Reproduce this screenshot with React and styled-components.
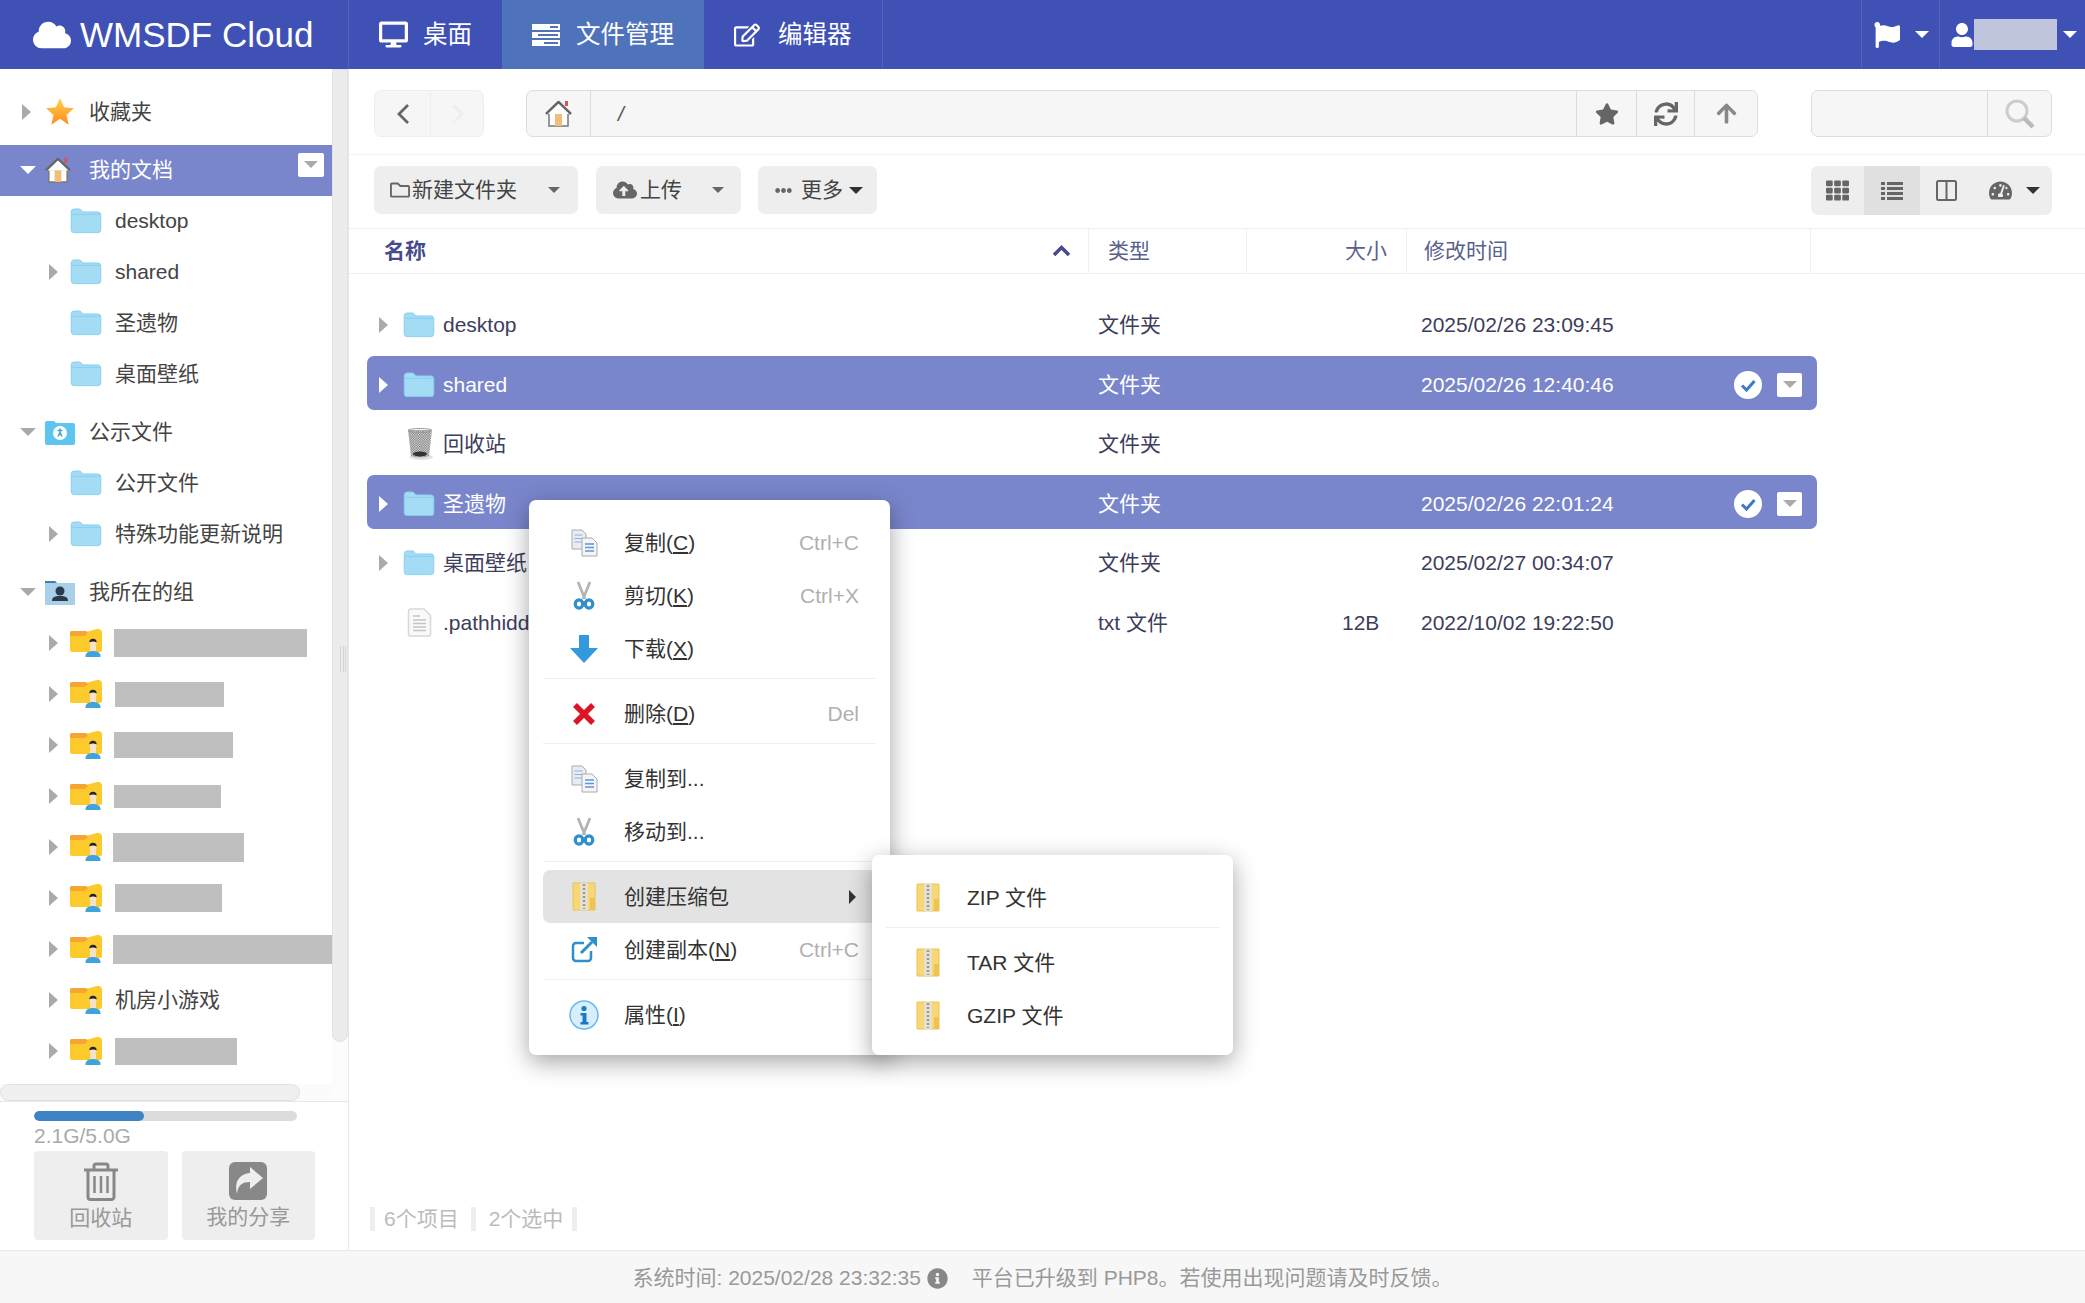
import React from 'react';
import styled, { createGlobalStyle } from 'styled-components';
import {
  FaCloud, FaDesktop, FaRegEdit, FaFlag, FaUser, FaStar, FaSync,
  FaArrowUp, FaTh, FaTachometerAlt, FaRegFolder, FaCloudUploadAlt,
  FaEllipsisH, FaInfoCircle,
} from 'react-icons/fa';

const GlobalStyle = createGlobalStyle`
  html, body { margin: 0; padding: 0; height: 100%; background: #fff; }
  body { font-family: "Liberation Sans", "Noto Sans CJK SC", sans-serif; font-size: 21px; line-height: 24px; color: #444; }
  * { box-sizing: border-box; }
`;

const Page = styled.div`
  position: relative;
  height: 100vh;
  display: flex;
  flex-direction: column;
  overflow: hidden;
`;

/* ---------- top bar ---------- */
const TopBar = styled.header`
  height: 69px;
  flex: none;
  display: flex;
  background: #3f51b5;
  color: #fff;
`;
const Brand = styled.div`
  width: 349px;
  display: flex;
  align-items: center;
  gap: 9px;
  padding-left: 33px;
  font-size: 35px;
  line-height: 40px;
  border-right: 1px solid #5263c0;
`;
const Tab = styled.div`
  display: flex;
  align-items: center;
  padding: 0 30px;
  font-size: 24.5px;
  line-height: 28px;
  background: ${(p) => (p.$active ? '#4f73bb' : 'transparent')};
  border-right: ${(p) => (p.$last ? '1px solid #5263c0' : 'none')};
`;
const TabIcon = styled.span`
  width: 44px;
  display: flex;
  font-size: ${(p) => p.$size || 29}px;
`;
const Spacer = styled.div`
  flex: 1;
`;
const TopCell = styled.div`
  width: ${(p) => p.$w}px;
  display: flex;
  align-items: center;
  border-left: 1px solid #5263c0;
  padding-left: ${(p) => p.$pad}px;
`;
const Caret = styled.span`
  flex: none;
  width: 0;
  height: 0;
  border-left: ${(p) => p.$size || 7}px solid transparent;
  border-right: ${(p) => p.$size || 7}px solid transparent;
  border-top: ${(p) => p.$size || 7}px solid ${(p) => p.$color || '#fff'};
  margin-left: ${(p) => p.$ml || 0}px;
`;
const UserBlock = styled.div`
  width: 83px;
  height: 31px;
  background: #bfc5dc;
`;

/* ---------- body ---------- */
const Body = styled.div`
  flex: 1;
  min-height: 0;
  display: flex;
`;
const Sidebar = styled.aside`
  width: 349px;
  flex: none;
  display: flex;
  flex-direction: column;
  border-right: 1px solid #e8e8e8;
`;
const TreePane = styled.div`
  flex: 1;
  min-height: 0;
  display: flex;
`;
const TreeCol = styled.div`
  width: 332px;
  display: flex;
  flex-direction: column;
`;
const Tree = styled.div`
  flex: 1;
  min-height: 0;
  padding-top: 17.5px;
  overflow: hidden;
`;
const TreeGroup = styled.div`
  margin-bottom: 7px;
`;
const TreeRow = styled.div`
  height: 51px;
  display: flex;
  align-items: center;
  padding-left: ${(p) => (p.$level ? 49 : 20)}px;
  background: ${(p) => (p.$selected ? '#7986cb' : 'transparent')};
  color: ${(p) => (p.$selected ? '#fff' : '#444')};
`;
const ArrowSlot = styled.span`
  flex: none;
  width: ${(p) => p.$w || (p.$level ? 21 : 25)}px;
  display: flex;
  align-items: center;
`;
const ArrowRight = styled.span`
  width: 0;
  height: 0;
  border-top: 8px solid transparent;
  border-bottom: 8px solid transparent;
  border-left: 9px solid ${(p) => p.$color || '#aaa'};
  margin-left: ${(p) => p.$ml || 0}px;
`;
const IconSlot = styled.span`
  flex: none;
  width: ${(p) => p.$w || 45}px;
  display: flex;
  align-items: center;
`;
const Redacted = styled.div`
  background: #bfbfbf;
  width: ${(p) => p.$w}px;
  height: ${(p) => p.$h}px;
  margin-left: ${(p) => p.$ml || 0}px;
`;
const SmallDrop = styled.span`
  flex: none;
  display: flex;
  align-items: center;
  justify-content: center;
  width: ${(p) => p.$w}px;
  height: 24px;
  background: #fff;
  border-radius: 2px;
`;
const SideDrop = styled(SmallDrop)`
  margin-left: auto;
  margin-right: 8px;
  align-self: flex-start;
  margin-top: 8px;
`;
const HTrack = styled.div`
  height: 17px;
  flex: none;
  background: #fbfbfb;
`;
const HThumb = styled.div`
  width: 300px;
  height: 17px;
  background: #f0f0f0;
  border: 1px solid #e0e0e0;
  border-radius: 9px;
`;
const VTrack = styled.div`
  position: relative;
  flex: 1;
  background: #fcfcfc;
`;
const VThumb = styled.div`
  height: 973px;
  background: #ececec;
  border: 1px solid #e2e2e2;
  border-radius: 0 0 8px 8px;
`;
const Grip = styled.div`
  position: absolute;
  left: 8px;
  top: 577px;
  width: 6px;
  height: 26px;
  border-left: 1px solid #d4d4d4;
  border-right: 1px solid #d4d4d4;
  background: linear-gradient(#d4d4d4, #d4d4d4) center / 1px 100% no-repeat;
`;
const SideBottom = styled.div`
  height: 149px;
  flex: none;
  border-top: 1px solid #e8e8e8;
  padding: 9px 33px 0 34px;
`;
const QuotaBar = styled.div`
  width: 263px;
  height: 10px;
  border-radius: 5px;
  background: #dcdcdc;
  overflow: hidden;
`;
const QuotaFill = styled.div`
  height: 100%;
  background: #3f85c5;
  border-radius: 5px;
`;
const QuotaText = styled.div`
  color: #aaa;
  margin-top: 3px;
`;
const SideButtons = styled.div`
  display: flex;
  gap: 14px;
  margin-top: 3px;
`;
const SideButton = styled.div`
  flex: 1;
  height: 89px;
  background: #eee;
  border-radius: 4px;
  display: flex;
  flex-direction: column;
  align-items: center;
  padding-top: 11px;
  color: #999;
`;
const SideLabel = styled.div`
  margin-top: 5px;
`;

/* ---------- main ---------- */
const Main = styled.main`
  flex: 1;
  min-width: 0;
  display: flex;
  flex-direction: column;
`;
const PathBar = styled.div`
  flex: none;
  height: 86px;
  padding: 21px 33px 0 25px;
  display: flex;
  border-bottom: 1px solid #f3f3f3;
`;
const Boxed = styled.div`
  height: 47px;
  width: ${(p) => (p.$w ? `${p.$w}px` : 'auto')};
  flex: ${(p) => (p.$w ? 'none' : '1')};
  margin-left: ${(p) => p.$ml || 0}px;
  display: flex;
  background: #f6f6f6;
  border: 1px solid ${(p) => p.$border || '#ddd'};
  border-radius: 7px;
`;
const BoxCell = styled.div`
  width: ${(p) => (p.$w ? `${p.$w}px` : 'auto')};
  flex: ${(p) => (p.$w ? 'none' : '1')};
  display: flex;
  align-items: center;
  justify-content: ${(p) => (p.$w ? 'center' : 'flex-start')};
  font-size: ${(p) => p.$size || 24}px;
  color: ${(p) => p.$color || '#666'};
  border-left: ${(p) => (p.$first ? 'none' : `1px solid ${p.$border || '#ddd'}`)};
`;
const PathText = styled.span`
  font-size: 21px;
  font-style: italic;
  color: #555;
  margin-left: 27px;
`;
const ActionBar = styled.div`
  flex: none;
  height: 73px;
  padding: 11px 33px 0 25px;
  display: flex;
  align-items: flex-start;
`;
const ActionButton = styled.div`
  height: 48px;
  display: flex;
  align-items: center;
  background: #eee;
  border-radius: 7px;
  margin-right: ${(p) => p.$mr || 0}px;
  padding: 0 ${(p) => p.$pr}px 0 ${(p) => p.$pl}px;
  color: #444;
`;
const ActionIcon = styled.span`
  display: flex;
  color: #666;
  font-size: ${(p) => p.$size}px;
  margin-right: ${(p) => p.$mr}px;
`;
const ViewGroup = styled.div`
  margin-left: auto;
  height: 49px;
  width: 241px;
  display: flex;
  background: #eee;
  border-radius: 7px;
  overflow: hidden;
`;
const ViewCell = styled.div`
  width: ${(p) => p.$w}px;
  display: flex;
  align-items: center;
  justify-content: ${(p) => (p.$left ? 'flex-start' : 'center')};
  padding-left: ${(p) => (p.$left ? 16 : 0)}px;
  background: ${(p) => (p.$active ? '#e0e0e0' : 'transparent')};
  color: #666;
  font-size: 23px;
`;
const TableHead = styled.div`
  flex: none;
  height: 46px;
  display: flex;
  border-top: 1px solid #eee;
  border-bottom: 1px solid #eee;
  color: #5a5f8c;
`;
const HeadCell = styled.div`
  width: ${(p) => p.$w}px;
  display: flex;
  align-items: center;
  justify-content: ${(p) => p.$justify || 'flex-start'};
  padding: 0 ${(p) => p.$pr || 0}px 0 ${(p) => p.$pl || 0}px;
  border-right: 1px solid #f0f0f0;
  font-weight: ${(p) => (p.$bold ? 700 : 400)};
  color: ${(p) => (p.$bold ? '#454b8c' : 'inherit')};
`;
const FileList = styled.div`
  flex: 1;
  min-height: 0;
  padding: 22.5px 0 0 18px;
`;
const FileRow = styled.div`
  width: 1450px;
  height: 54px;
  margin-bottom: 5.5px;
  padding: 3px 0 0 12px;
  display: grid;
  grid-template-columns: 719px 244px 79px 1fr;
  align-items: center;
  border-radius: 7px;
  background: ${(p) => (p.$selected ? '#7986cb' : 'transparent')};
  color: ${(p) => (p.$selected ? '#fff' : '#3d3d5c')};
`;
const NameCell = styled.div`
  display: flex;
  align-items: center;
  white-space: nowrap;
`;
const FileIconSlot = styled.span`
  flex: none;
  width: 40px;
  display: flex;
  padding-left: ${(p) => p.$pl || 0}px;
`;
const TimeCell = styled.div`
  display: flex;
  align-items: center;
  justify-content: space-between;
  padding-right: 15px;
`;
const RowMarks = styled.div`
  display: flex;
  align-items: center;
  gap: 15px;
`;
const StatusBar = styled.div`
  flex: none;
  display: flex;
  padding: 0 0 19px 21px;
  color: #bbb;
`;
const StatusItem = styled.span`
  padding: 0 ${(p) => p.$pr || 0}px 0 ${(p) => p.$pl || 0}px;
  border-left: 5px solid #eee;
`;
const Footer = styled.footer`
  height: 53px;
  flex: none;
  padding-top: 2px;
  background: #f7f7f7;
  border-top: 1px solid #e8e8e8;
  display: flex;
  align-items: center;
  justify-content: center;
  color: #999;
`;
const FooterInfo = styled.span`
  display: flex;
  color: #888;
  margin: 0 24px 0 6px;
`;

/* ---------- context menu ---------- */
const Menu = styled.div`
  position: absolute;
  left: ${(p) => p.$left}px;
  top: ${(p) => p.$top}px;
  width: ${(p) => p.$w}px;
  padding: ${(p) => p.$pad};
  background: #fff;
  border-radius: 7px;
  box-shadow: 0 7px 24px rgba(0, 0, 0, 0.36);
  color: #333;
`;
const MenuRow = styled.div`
  height: 53px;
  display: flex;
  align-items: center;
  border-radius: 7px;
  padding-left: ${(p) => p.$pl}px;
  background: ${(p) => (p.$hover ? '#e3e3e3' : 'transparent')};
`;
const MenuIcon = styled.span`
  flex: none;
  width: ${(p) => p.$w}px;
  display: flex;
  justify-content: ${(p) => (p.$center ? 'center' : 'flex-start')};
  padding-right: ${(p) => p.$pr || 0}px;
`;
const Shortcut = styled.span`
  margin-left: auto;
  margin-right: 17px;
  color: #b0b0b0;
`;
const MenuSep = styled.div`
  height: 1px;
  margin: 3px 0 8px;
  background: #eee;
`;
const SubArrow = styled.span`
  margin-left: auto;
  margin-right: 20px;
  width: 0;
  height: 0;
  border-top: 7px solid transparent;
  border-bottom: 7px solid transparent;
  border-left: 7px solid #333;
`;

/* ---------- drawn icons ---------- */
const FolderIcon = ({ width = 32 }) => (
  <svg width={width} height={width * 0.8} viewBox="0 0 32 26">
    <path d="M1 4a3 3 0 0 1 3-3h6l3 3h15a3 3 0 0 1 3 3v15a3 3 0 0 1-3 3H4a3 3 0 0 1-3-3z" fill="#a4dcf6" stroke="#88cfee" />
    <path d="M1.5 6.5h29" stroke="#88cfee" strokeWidth="1" />
  </svg>
);

const PublicFolder = () => (
  <svg width="30" height="25" viewBox="0 0 30 25">
    <path d="M0 3a2 2 0 0 1 2-2h7l2 2h17a2 2 0 0 1 2 2v18a2 2 0 0 1-2 2H2a2 2 0 0 1-2-2z" fill="#5cc5f0" />
    <circle cx="15" cy="13" r="7" fill="#fff" />
    <path d="M15 8.500v4m-2.500-2h5m-2.500 2-2 4m2-4 2 4" stroke="#3fa5dc" strokeWidth="1.500" fill="none" />
  </svg>
);

const GroupFolder = () => (
  <svg width="30" height="25" viewBox="0 0 30 25">
    <path d="M0 1h10l2 2h18v22H0z" fill="#a9cfe9" />
    <path d="M0 1h10l2 2H0z" fill="#3e7fb0" />
    <circle cx="15" cy="11" r="4.500" fill="#2a3a4c" />
    <path d="M7 21c0-5 5-5 8-5s8 0 8 5z" fill="#2a3a4c" />
  </svg>
);

const UserFolder = () => (
  <svg width="32" height="28" viewBox="0 0 32 28">
    <path d="M0 4a2 2 0 0 1 2-2h8l2 2 15-4a4 4 0 0 1 5 3v18a2 2 0 0 1-2 2H2a2 2 0 0 1-2-2z" fill="#fcca2b" />
    <path d="M0 4a2 2 0 0 1 2-2h14l2 2-3 3H0z" fill="#f5a532" />
    <rect x="20" y="15" width="6" height="8" fill="#f9e2c4" />
    <path d="M15.500 28c-.500-4 3-6 7.500-6s8 2 7.500 6z" fill="#3fa3dc" />
    <circle cx="23" cy="14" r="3.600" fill="#f9e2c4" />
    <path d="M19.300 13.500a3.700 3.700 0 0 1 7.400 0c-2-1.500-5.400-1.500-7.400 0z" fill="#222" />
  </svg>
);

const HomeIcon = ({ size = 27 }) => (
  <svg width={size} height={size} viewBox="0 0 27 27">
    <rect x="20" y="1" width="3" height="5" fill="#d9534f" />
    <path d="M4 13h19v13H4z" fill="#fff" stroke="#777" strokeWidth="1.500" />
    <path d="M1 14 13.500 2 26 14" fill="#fff" stroke="#666" strokeWidth="2.500" strokeLinejoin="round" />
    <path d="M4 13 13.500 4 23 13z" fill="#fff" />
    <rect x="10" y="14" width="7" height="12" fill="#efbe78" />
  </svg>
);

const StarIcon = () => (
  <svg width="30" height="30" viewBox="0 0 28 28">
    <defs>
      <linearGradient id="starFill" x1="0" y1="0" x2="0" y2="1">
        <stop offset="0" stopColor="#ffd24d" />
        <stop offset="1" stopColor="#ff8a1e" />
      </linearGradient>
    </defs>
    <path d="M14 1l3.800 8.600 9.200.9-7 6.200 2.100 9.300L14 20.300 5.900 26l2.100-9.300-7-6.200 9.200-.9z" fill="url(#starFill)" />
  </svg>
);

const BinIcon = () => (
  <svg width="27" height="34" viewBox="0 0 27 34">
    <defs>
      <pattern id="mesh" width="2.400" height="2.400" patternUnits="userSpaceOnUse">
        <rect width="2.400" height="2.400" fill="#eee" />
        <rect width="1.200" height="1.200" fill="#666" />
        <rect x="1.200" y="1.200" width="1.200" height="1.200" fill="#666" />
      </pattern>
    </defs>
    <ellipse cx="14" cy="30" rx="12" ry="3" fill="#e2e2e2" />
    <path d="M1 3h24l-3 26q-9 3-18 0z" fill="url(#mesh)" />
    <ellipse cx="13" cy="3.500" rx="12" ry="2" fill="none" stroke="#999" />
    <ellipse cx="13" cy="27" rx="7" ry="2.500" fill="#333" />
  </svg>
);

const DocIcon = () => (
  <svg width="25" height="29" viewBox="0 0 25 29">
    <path d="M1.500 3a2 2 0 0 1 2-2H17l6.500 6.500V26a2 2 0 0 1-2 2h-18a2 2 0 0 1-2-2z" fill="#f9f9f9" stroke="#d8d8d8" strokeWidth="1.500" />
    <path d="M6 8h7M6 12h13M6 15.500h13M6 19h13M6 22.500h13" stroke="#c4c4c4" strokeWidth="1.400" />
  </svg>
);

const CopyIcon = () => (
  <svg width="27" height="28" viewBox="0 0 27 28">
    <path d="M1 1h10l4 4v15H1z" fill="#e9edf3" stroke="#aaa" />
    <path d="M3.500 6h8M3.500 9.500h8M3.500 13h8" stroke="#8fb1e0" />
    <path d="M11 9h10l5 5v13H11z" fill="#f5f5f5" stroke="#aaa" />
    <path d="M14 15h9M14 18.500h9M14 22h9" stroke="#5b94e0" strokeWidth="1.500" />
  </svg>
);

const ScissorsIcon = () => (
  <svg width="22" height="29" viewBox="0 0 22 29">
    <path d="M5 1l7 17M17 1l-7 17" stroke="#b4b4b4" strokeWidth="2.800" fill="none" />
    <ellipse cx="6" cy="23" rx="3.800" ry="4.200" fill="none" stroke="#2f8fc9" strokeWidth="3.200" />
    <ellipse cx="16" cy="23" rx="3.800" ry="4.200" fill="none" stroke="#2f8fc9" strokeWidth="3.200" />
  </svg>
);

const DownIcon = () => (
  <svg width="28" height="28" viewBox="0 0 28 28">
    <path d="M9 0h10v13h9L14 28 0 13h9z" fill="#3498de" />
  </svg>
);

const CrossIcon = () => (
  <svg width="24" height="24" viewBox="0 0 24 24">
    <path d="M3 3l18 18M21 3L3 21" stroke="#db1526" strokeWidth="5.500" />
  </svg>
);

const ZipIcon = () => (
  <svg width="24" height="29" viewBox="0 0 24 29">
    <path d="M1 1h22v27H1z" fill="#f8d775" stroke="#e8c25c" />
    <path d="M18 16h5v12h-5z" fill="#efc251" />
    <rect x="8" y="1" width="8" height="27" fill="#e6e1cf" />
    <path d="M12 2v25" stroke="#999" strokeWidth="2.500" strokeDasharray="2 2" />
  </svg>
);

const OpenCopyIcon = () => (
  <svg width="27" height="27" viewBox="0 0 27 27">
    <path d="M20 15v7a3 3 0 0 1-3 3H5a3 3 0 0 1-3-3V10a3 3 0 0 1 3-3h8" fill="none" stroke="#2f8fc9" strokeWidth="2.500" />
    <path d="M10 17 21 6" stroke="#2f8fc9" strokeWidth="3" />
    <path d="M16 1h10v10z" fill="#2f8fc9" />
  </svg>
);

const InfoIcon = () => (
  <svg width="30" height="30" viewBox="0 0 30 30">
    <circle cx="15" cy="15" r="14" fill="#d8eefc" stroke="#6db8ee" strokeWidth="1.500" />
    <circle cx="15" cy="8.500" r="2.600" fill="#1c78c0" />
    <path d="M11.500 13h6v9h2v2.500h-8V22h2v-6.500h-2z" fill="#1c78c0" />
  </svg>
);

const ServerIcon = () => (
  <svg width="28" height="24" viewBox="0 0 28 24">
    <path d="M0 1h28v6H0zM0 9h28v6H0zM0 17h28v6H0z" fill="#fff" />
    <path d="M18 3h8v2h-8zM6 11h20v2H6zM12 19h14v2H12z" fill="#4f73bb" />
  </svg>
);

const TrashLines = () => (
  <svg width="36" height="39" viewBox="0 0 36 39" fill="none" stroke="#888" strokeWidth="3">
    <path d="M1 8h34" />
    <path d="M11 8V4a2 2 0 0 1 2-2h10a2 2 0 0 1 2 2v4" />
    <path d="M5 8v27a2.500 2.500 0 0 0 2.500 2.500h21A2.500 2.500 0 0 0 31 35V8" />
    <path d="M11.500 14v17M18 14v17M24.500 14v17" strokeWidth="2.500" />
  </svg>
);

const ShareBox = () => (
  <svg width="38" height="38" viewBox="0 0 38 38">
    <rect width="38" height="38" rx="6" fill="#888" />
    <path d="M21 5l13 11-13 11v-7c-8 0-12 3-13 12-3-12 2-20 13-21z" fill="#eee" />
  </svg>
);

const Angle = ({ dir, color }) => (
  <svg width="14" height="20" viewBox="0 0 14 20">
    <path d={dir === 'left' ? 'M12 1 3 10l9 9' : 'M2 1l9 9-9 9'} fill="none" stroke={color} strokeWidth="2.800" />
  </svg>
);

const ListLines = () => (
  <svg width="22" height="20" viewBox="0 0 22 20" fill="#666">
    <path d="M0 1h4v3H0zM6 1h16v3H6zM0 6h4v3H0zM6 6h16v3H6zM0 11h4v3H0zM6 11h16v3H6zM0 16h4v3H0zM6 16h16v3H6z" />
  </svg>
);

const SplitView = () => (
  <svg width="21" height="21" viewBox="0 0 21 21" fill="none" stroke="#666" strokeWidth="2">
    <rect x="1" y="1" width="19" height="19" rx="1.500" />
    <path d="M10.500 1v19" />
  </svg>
);

const Magnifier = () => (
  <svg width="30" height="30" viewBox="0 0 30 30" fill="none" stroke="#ccc">
    <circle cx="12" cy="12" r="10" strokeWidth="3" />
    <path d="M19 19l9 9" stroke="#bbb" strokeWidth="4.500" />
  </svg>
);

const DropTriangle = () => <Caret $size={7} $color="#aaa" />;

const CheckMark = () => (
  <svg width="28" height="28" viewBox="0 0 28 28">
    <circle cx="14" cy="14" r="14" fill="#fff" />
    <path d="M8 14.500l4.500 4.500 8-9" fill="none" stroke="#3f78c9" strokeWidth="3" />
  </svg>
);

/* ---------- data ---------- */
const docs = ['desktop', 'shared', '圣遗物', '桌面壁纸'];
const blocks = [
  { w: 193, h: 28, ml: -1 }, { w: 109, h: 25 }, { w: 119, h: 26, ml: -1 }, { w: 107, h: 23, ml: -1 },
  { w: 131, h: 29, ml: -2 }, { w: 107, h: 28 }, { w: 219, h: 29, ml: -2 }, { text: '机房小游戏' }, { w: 122, h: 27 },
];
const files = [
  { name: 'desktop', arrow: true, type: '文件夹', time: '2025/02/26 23:09:45' },
  { name: 'shared', arrow: true, type: '文件夹', time: '2025/02/26 12:40:46', selected: true },
  { name: '回收站', icon: <BinIcon />, type: '文件夹' },
  { name: '圣遗物', arrow: true, type: '文件夹', time: '2025/02/26 22:01:24', selected: true },
  { name: '桌面壁纸', arrow: true, type: '文件夹', time: '2025/02/27 00:34:07' },
  { name: '.pathhidden', icon: <DocIcon />, type: 'txt 文件', size: '12B', time: '2022/10/02 19:22:50' },
];
const menuItems = [
  { icon: <CopyIcon />, label: '复制', key: 'C', shortcut: 'Ctrl+C' },
  { icon: <ScissorsIcon />, label: '剪切', key: 'K', shortcut: 'Ctrl+X' },
  { icon: <DownIcon />, label: '下载', key: 'X', sep: true },
  { icon: <CrossIcon />, label: '删除', key: 'D', shortcut: 'Del', sep: true },
  { icon: <CopyIcon />, label: '复制到...' },
  { icon: <ScissorsIcon />, label: '移动到...', sep: true },
  { icon: <ZipIcon />, label: '创建压缩包', hover: true },
  { icon: <OpenCopyIcon />, label: '创建副本', key: 'N', shortcut: 'Ctrl+C', sep: true },
  { icon: <InfoIcon />, label: '属性', key: 'I' },
];

const MenuLabel = ({ label, hotkey }) => (
  <span>
    {label}
    {hotkey && <>(<u>{hotkey}</u>)</>}
  </span>
);

function Sidebars() {
  return (
    <Sidebar>
      <TreePane>
        <TreeCol>
          <Tree>
            <TreeGroup>
              <TreeRow>
                <ArrowSlot><ArrowRight $ml={2} /></ArrowSlot>
                <IconSlot $w={44}><StarIcon /></IconSlot>
                收藏夹
              </TreeRow>
            </TreeGroup>
            <TreeGroup>
              <TreeRow $selected>
                <ArrowSlot><Caret $size={8} /></ArrowSlot>
                <IconSlot $w={44}><HomeIcon size={26} /></IconSlot>
                我的文档
                <SideDrop $w={26}><DropTriangle /></SideDrop>
              </TreeRow>
              {docs.map((d) => (
                <TreeRow $level={1} key={d}>
                  <ArrowSlot $level={1}>{d === 'shared' && <ArrowRight />}</ArrowSlot>
                  <IconSlot><FolderIcon /></IconSlot>
                  {d}
                </TreeRow>
              ))}
            </TreeGroup>
            <TreeGroup>
              <TreeRow>
                <ArrowSlot><Caret $size={8} $color="#aaa" /></ArrowSlot>
                <IconSlot $w={44}><PublicFolder /></IconSlot>
                公示文件
              </TreeRow>
              <TreeRow $level={1}>
                <ArrowSlot $level={1} />
                <IconSlot><FolderIcon /></IconSlot>
                公开文件
              </TreeRow>
              <TreeRow $level={1}>
                <ArrowSlot $level={1}><ArrowRight /></ArrowSlot>
                <IconSlot><FolderIcon /></IconSlot>
                特殊功能更新说明
              </TreeRow>
            </TreeGroup>
            <TreeGroup>
              <TreeRow>
                <ArrowSlot><Caret $size={8} $color="#aaa" /></ArrowSlot>
                <IconSlot $w={44}><GroupFolder /></IconSlot>
                我所在的组
              </TreeRow>
              {blocks.map((b, i) => (
                <TreeRow $level={1} key={i}>
                  <ArrowSlot $level={1}><ArrowRight /></ArrowSlot>
                  <IconSlot><UserFolder /></IconSlot>
                  {b.text ? b.text : <Redacted $w={b.w} $h={b.h} $ml={b.ml} />}
                </TreeRow>
              ))}
            </TreeGroup>
          </Tree>
          <HTrack><HThumb /></HTrack>
        </TreeCol>
        <VTrack>
          <VThumb />
          <Grip />
        </VTrack>
      </TreePane>
      <SideBottom>
        <QuotaBar><QuotaFill style={{ width: `${(2.1 / 5) * 100}%` }} /></QuotaBar>
        <QuotaText>2.1G/5.0G</QuotaText>
        <SideButtons>
          <SideButton>
            <TrashLines />
            <SideLabel>回收站</SideLabel>
          </SideButton>
          <SideButton>
            <ShareBox />
            <SideLabel>我的分享</SideLabel>
          </SideButton>
        </SideButtons>
      </SideBottom>
    </Sidebar>
  );
}

export default function App() {
  return (
    <Page>
      <GlobalStyle />
      <TopBar>
        <Brand>
          <FaCloud size={38} />
          WMSDF Cloud
        </Brand>
        <Tab>
          <TabIcon><FaDesktop /></TabIcon>
          桌面
        </Tab>
        <Tab $active>
          <TabIcon><ServerIcon /></TabIcon>
          文件管理
        </Tab>
        <Tab $last>
          <TabIcon $size={26}><FaRegEdit /></TabIcon>
          编辑器
        </Tab>
        <Spacer />
        <TopCell $w={78} $pad={12}>
          <FaFlag size={26} />
          <Caret $ml={15} />
        </TopCell>
        <TopCell $w={146} $pad={10}>
          <FaUser size={24} />
          <UserBlock />
          <Caret $ml={6} />
        </TopCell>
      </TopBar>

      <Body>
        <Sidebars />
        <Main>
          <PathBar>
            <Boxed $w={110} $border="#eee">
              <BoxCell $w={55} $first><Angle dir="left" color="#666" /></BoxCell>
              <BoxCell $w={54} $border="#eee"><Angle dir="right" color="#eee" /></BoxCell>
            </Boxed>
            <Boxed $ml={42}>
              <BoxCell $w={63} $first><HomeIcon /></BoxCell>
              <BoxCell><PathText>/</PathText></BoxCell>
              <BoxCell $w={60}><FaStar /></BoxCell>
              <BoxCell $w={58}><FaSync /></BoxCell>
              <BoxCell $w={63} $size={23} $color="#888"><FaArrowUp /></BoxCell>
            </Boxed>
            <Boxed $w={241} $ml={53}>
              <BoxCell $first />
              <BoxCell $w={64}><Magnifier /></BoxCell>
            </Boxed>
          </PathBar>

          <ActionBar>
            <ActionButton $pl={16} $pr={18} $mr={18}>
              <ActionIcon $size={20} $mr={2}><FaRegFolder /></ActionIcon>
              新建文件夹
              <Caret $size={6} $color="#666" $ml={31} />
            </ActionButton>
            <ActionButton $pl={17} $pr={17} $mr={17}>
              <ActionIcon $size={24} $mr={3}><FaCloudUploadAlt /></ActionIcon>
              上传
              <Caret $size={6} $color="#666" $ml={30} />
            </ActionButton>
            <ActionButton $pl={17} $pr={14}>
              <ActionIcon $size={17} $mr={9}><FaEllipsisH /></ActionIcon>
              更多
              <Caret $size={7} $color="#333" $ml={6} />
            </ActionButton>
            <ViewGroup>
              <ViewCell $w={53}><FaTh /></ViewCell>
              <ViewCell $w={56} $active><ListLines /></ViewCell>
              <ViewCell $w={53}><SplitView /></ViewCell>
              <ViewCell $w={79} $left><FaTachometerAlt /><Caret $color="#333" $ml={14} /></ViewCell>
            </ViewGroup>
          </ActionBar>

          <TableHead>
            <HeadCell $w={740} $pl={35} $pr={17} $justify="space-between" $bold>
              名称
              <svg width="19" height="12" viewBox="0 0 19 12">
                <path d="M2 10l7.500-7.500L17 10" fill="none" stroke="#454b8c" strokeWidth="3.500" />
              </svg>
            </HeadCell>
            <HeadCell $w={158} $pl={19}>类型</HeadCell>
            <HeadCell $w={160} $pr={19} $justify="flex-end">大小</HeadCell>
            <HeadCell $w={404} $pl={17}>修改时间</HeadCell>
          </TableHead>

          <FileList>
            {files.map((f) => (
              <FileRow $selected={f.selected} key={f.name}>
                <NameCell>
                  <ArrowSlot $w={24}>
                    {f.arrow && <ArrowRight $color={f.selected ? '#fff' : '#aaa'} />}
                  </ArrowSlot>
                  <FileIconSlot $pl={f.icon ? 4 : 0}>{f.icon || <FolderIcon />}</FileIconSlot>
                  {f.name}
                </NameCell>
                <span>{f.type}</span>
                <span>{f.size}</span>
                <TimeCell>
                  <span>{f.time}</span>
                  {f.selected && (
                    <RowMarks>
                      <CheckMark />
                      <SmallDrop $w={25}><DropTriangle /></SmallDrop>
                    </RowMarks>
                  )}
                </TimeCell>
              </FileRow>
            ))}
          </FileList>

          <StatusBar>
            <StatusItem $pl={9} $pr={12}>6个项目</StatusItem>
            <StatusItem $pl={13} $pr={9}>2个选中</StatusItem>
            <StatusItem />
          </StatusBar>
        </Main>
      </Body>

      <Footer>
        系统时间: 2025/02/28 23:32:35
        <FooterInfo><FaInfoCircle /></FooterInfo>
        平台已升级到 PHP8。若使用出现问题请及时反馈。
      </Footer>

      <Menu $left={529} $top={500} $w={361} $pad="16px 14px 14px 14px">
        {menuItems.map((m) => (
          <React.Fragment key={m.label}>
            <MenuRow $pl={26} $hover={m.hover}>
              <MenuIcon $w={55} $pr={25} $center>{m.icon}</MenuIcon>
              <MenuLabel label={m.label} hotkey={m.key} />
              {m.shortcut && <Shortcut>{m.shortcut}</Shortcut>}
              {m.hover && <SubArrow />}
            </MenuRow>
            {m.sep && <MenuSep />}
          </React.Fragment>
        ))}
      </Menu>

      <Menu $left={872} $top={855} $w={361} $pad="16px 13px 13px 14px">
        <MenuRow $pl={30}>
          <MenuIcon $w={51}><ZipIcon /></MenuIcon>
          ZIP 文件
        </MenuRow>
        <MenuSep />
        <MenuRow $pl={30}>
          <MenuIcon $w={51}><ZipIcon /></MenuIcon>
          TAR 文件
        </MenuRow>
        <MenuRow $pl={30}>
          <MenuIcon $w={51}><ZipIcon /></MenuIcon>
          GZIP 文件
        </MenuRow>
      </Menu>
    </Page>
  );
}
